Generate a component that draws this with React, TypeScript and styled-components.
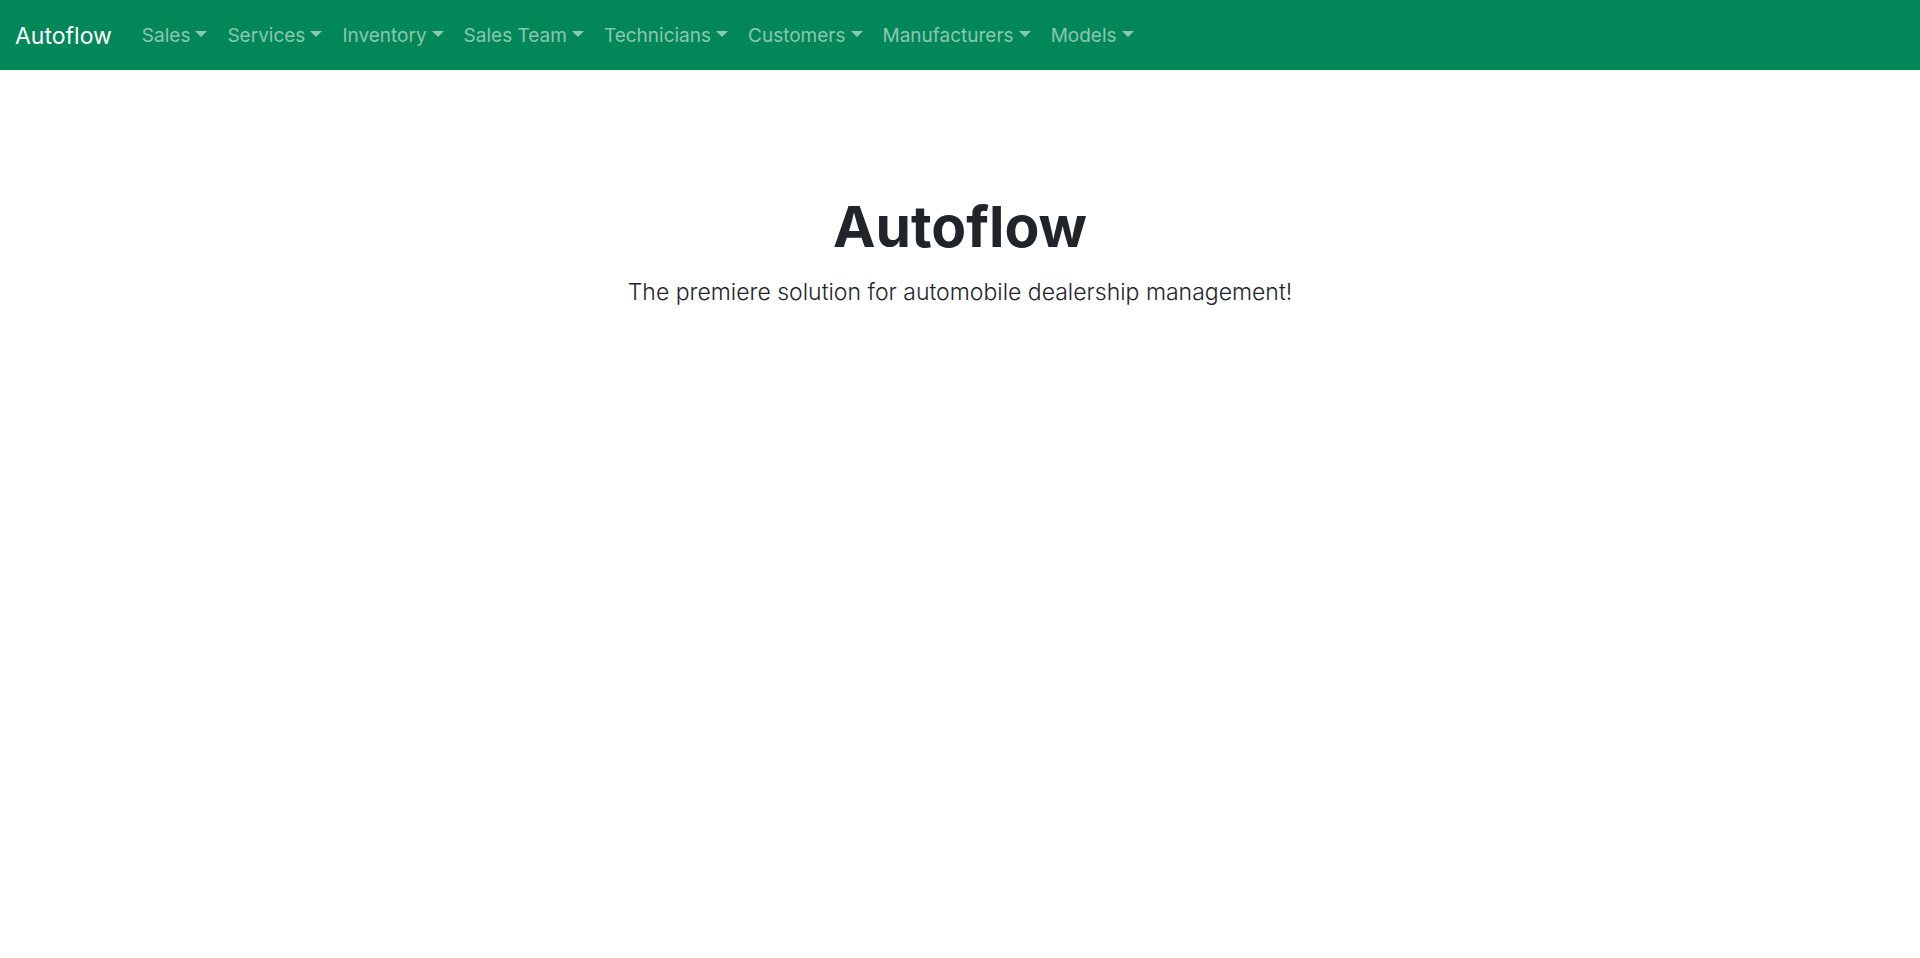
import React from "react";
import styled, { createGlobalStyle } from "styled-components";

const GlobalStyle = createGlobalStyle`
  *, *::before, *::after { box-sizing: border-box; }
  body {
    margin: 0;
    background: #fff;
    color: #212529;
    font-family: Inter, "Liberation Sans", sans-serif;
    font-size: 19px;
    line-height: 30px;
  }
`;

const Navbar = styled.nav`
  display: flex;
  align-items: center;
  padding: 11px 15px 9px;
  background: #028758;
`;

const Brand = styled.a`
  margin-right: 20px;
  padding: 6px 0;
  color: #fff;
  font-size: 23px;
  line-height: 38px;
  text-decoration: none;
`;

const NavList = styled.ul`
  display: flex;
  margin: 0;
  padding: 0;
  list-style: none;
`;

const Toggle = styled.button`
  display: flex;
  align-items: center;
  gap: 5px;
  padding: 10px;
  border: 0;
  background: none;
  color: rgba(255, 255, 255, 0.55);
  font: inherit;
  white-space: nowrap;
  cursor: pointer;

  &::after {
    content: "";
    margin-bottom: 4px;
    border-top: 6px solid;
    border-right: 6px solid transparent;
    border-left: 6px solid transparent;
  }
`;

const Hero = styled.main`
  padding: 121px 20px 60px;
  text-align: center;
`;

const Title = styled.h1`
  margin: 0 0 10px;
  font-size: 57px;
  font-weight: 700;
  line-height: 72px;
`;

const Lead = styled.p`
  margin: 0;
  font-size: 23px;
  font-weight: 300;
  line-height: 38px;
`;

const menus = [
  "Sales",
  "Services",
  "Inventory",
  "Sales Team",
  "Technicians",
  "Customers",
  "Manufacturers",
  "Models",
];

export default function App() {
  return (
    <>
      <GlobalStyle />
      <Navbar>
        <Brand href="#">Autoflow</Brand>
        <NavList>
          {menus.map((name) => (
            <li key={name}>
              <Toggle type="button" aria-haspopup="true">{name}</Toggle>
            </li>
          ))}
        </NavList>
      </Navbar>
      <Hero>
        <Title>Autoflow</Title>
        <Lead>The premiere solution for automobile dealership management!</Lead>
      </Hero>
    </>
  );
}
